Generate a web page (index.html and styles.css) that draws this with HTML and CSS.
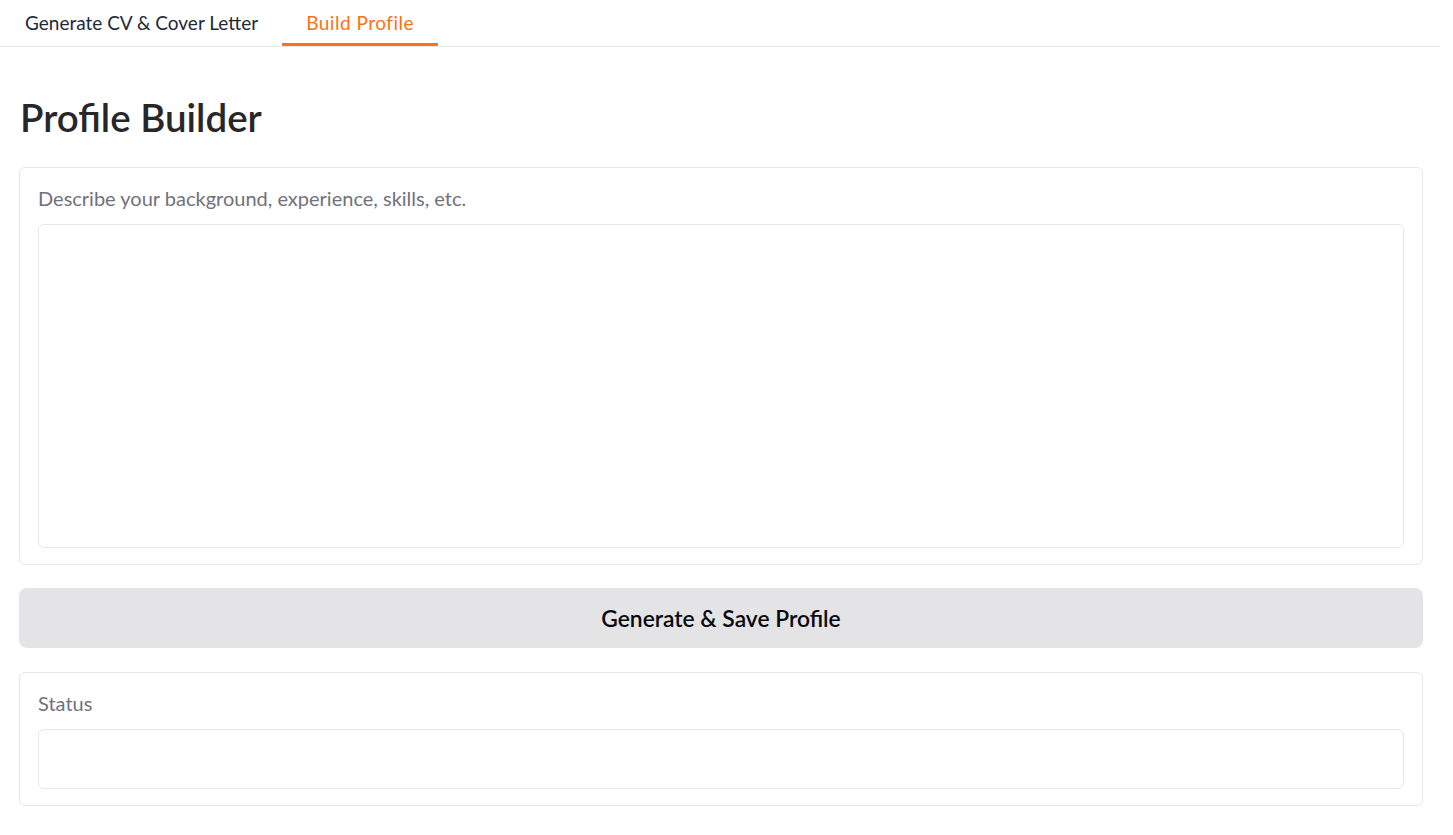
FILE: index.html
```html
<!DOCTYPE html>
<html>
<head>
<meta charset="utf-8">
<link rel="stylesheet" href="styles.css">
</head>
<body>
<div class="tabs">
  <div class="tab">Generate CV &amp; Cover Letter</div>
  <div class="tab active">Build Profile</div>
</div>
<main class="content">
  <h1 class="title">Profile Builder</h1>
  <section class="panel">
    <label class="label">Describe your background, experience, skills, etc.</label>
    <div class="textarea"></div>
  </section>
  <button class="btn">Generate &amp; Save Profile</button>
  <section class="panel">
    <label class="label">Status</label>
    <div class="input"></div>
  </section>
</main>
</body>
</html>
```
FILE: styles.css
```css
* { box-sizing: border-box; }
body {
  margin: 0;
  background: #fff;
  font-family: Lato, "Open Sans", sans-serif;
  color: #27272a;
}
.tabs {
  display: flex;
  width: 1440px;
  height: 47px;
  border-bottom: 1px solid #e5e7eb;
  padding-left: 1px;
}
.tab {
  height: 46px;
  padding: 1px 24px 0;
  display: flex;
  align-items: center;
  font-size: 19px;
  color: #1f2937;
  border-bottom: 3px solid transparent;
}
.tab.active {
  color: #f97316;
  border-bottom-color: #f97316;
  letter-spacing: 0.5px;
}
.content {
  width: 1404px;
  margin-left: 19px;
  display: flex;
  flex-direction: column;
}
.title {
  margin: 47px 0 27px 1px;
  font-size: 38.5px;
  font-weight: 600;
  line-height: 46px;
  color: #27272a;
}
.panel {
  border: 1px solid #e5e7eb;
  border-radius: 6px;
  padding: 16px 18px 16px 18px;
  display: flex;
  flex-direction: column;
}
.label {
  font-size: 20px;
  line-height: 28px;
  color: #71717a;
  margin-bottom: 12px;
}
.textarea {
  height: 324px;
  border: 1px solid #e5e7eb;
  border-radius: 6px;
}
.input {
  height: 60px;
  border: 1px solid #e5e7eb;
  border-radius: 6px;
}
.btn {
  margin: 23px 0 24px;
  height: 60px;
  border: none;
  border-radius: 8px;
  background: #e4e4e7;
  font-family: inherit;
  font-size: 22.8px;
  font-weight: 600;
  color: #09090b;
}
```
